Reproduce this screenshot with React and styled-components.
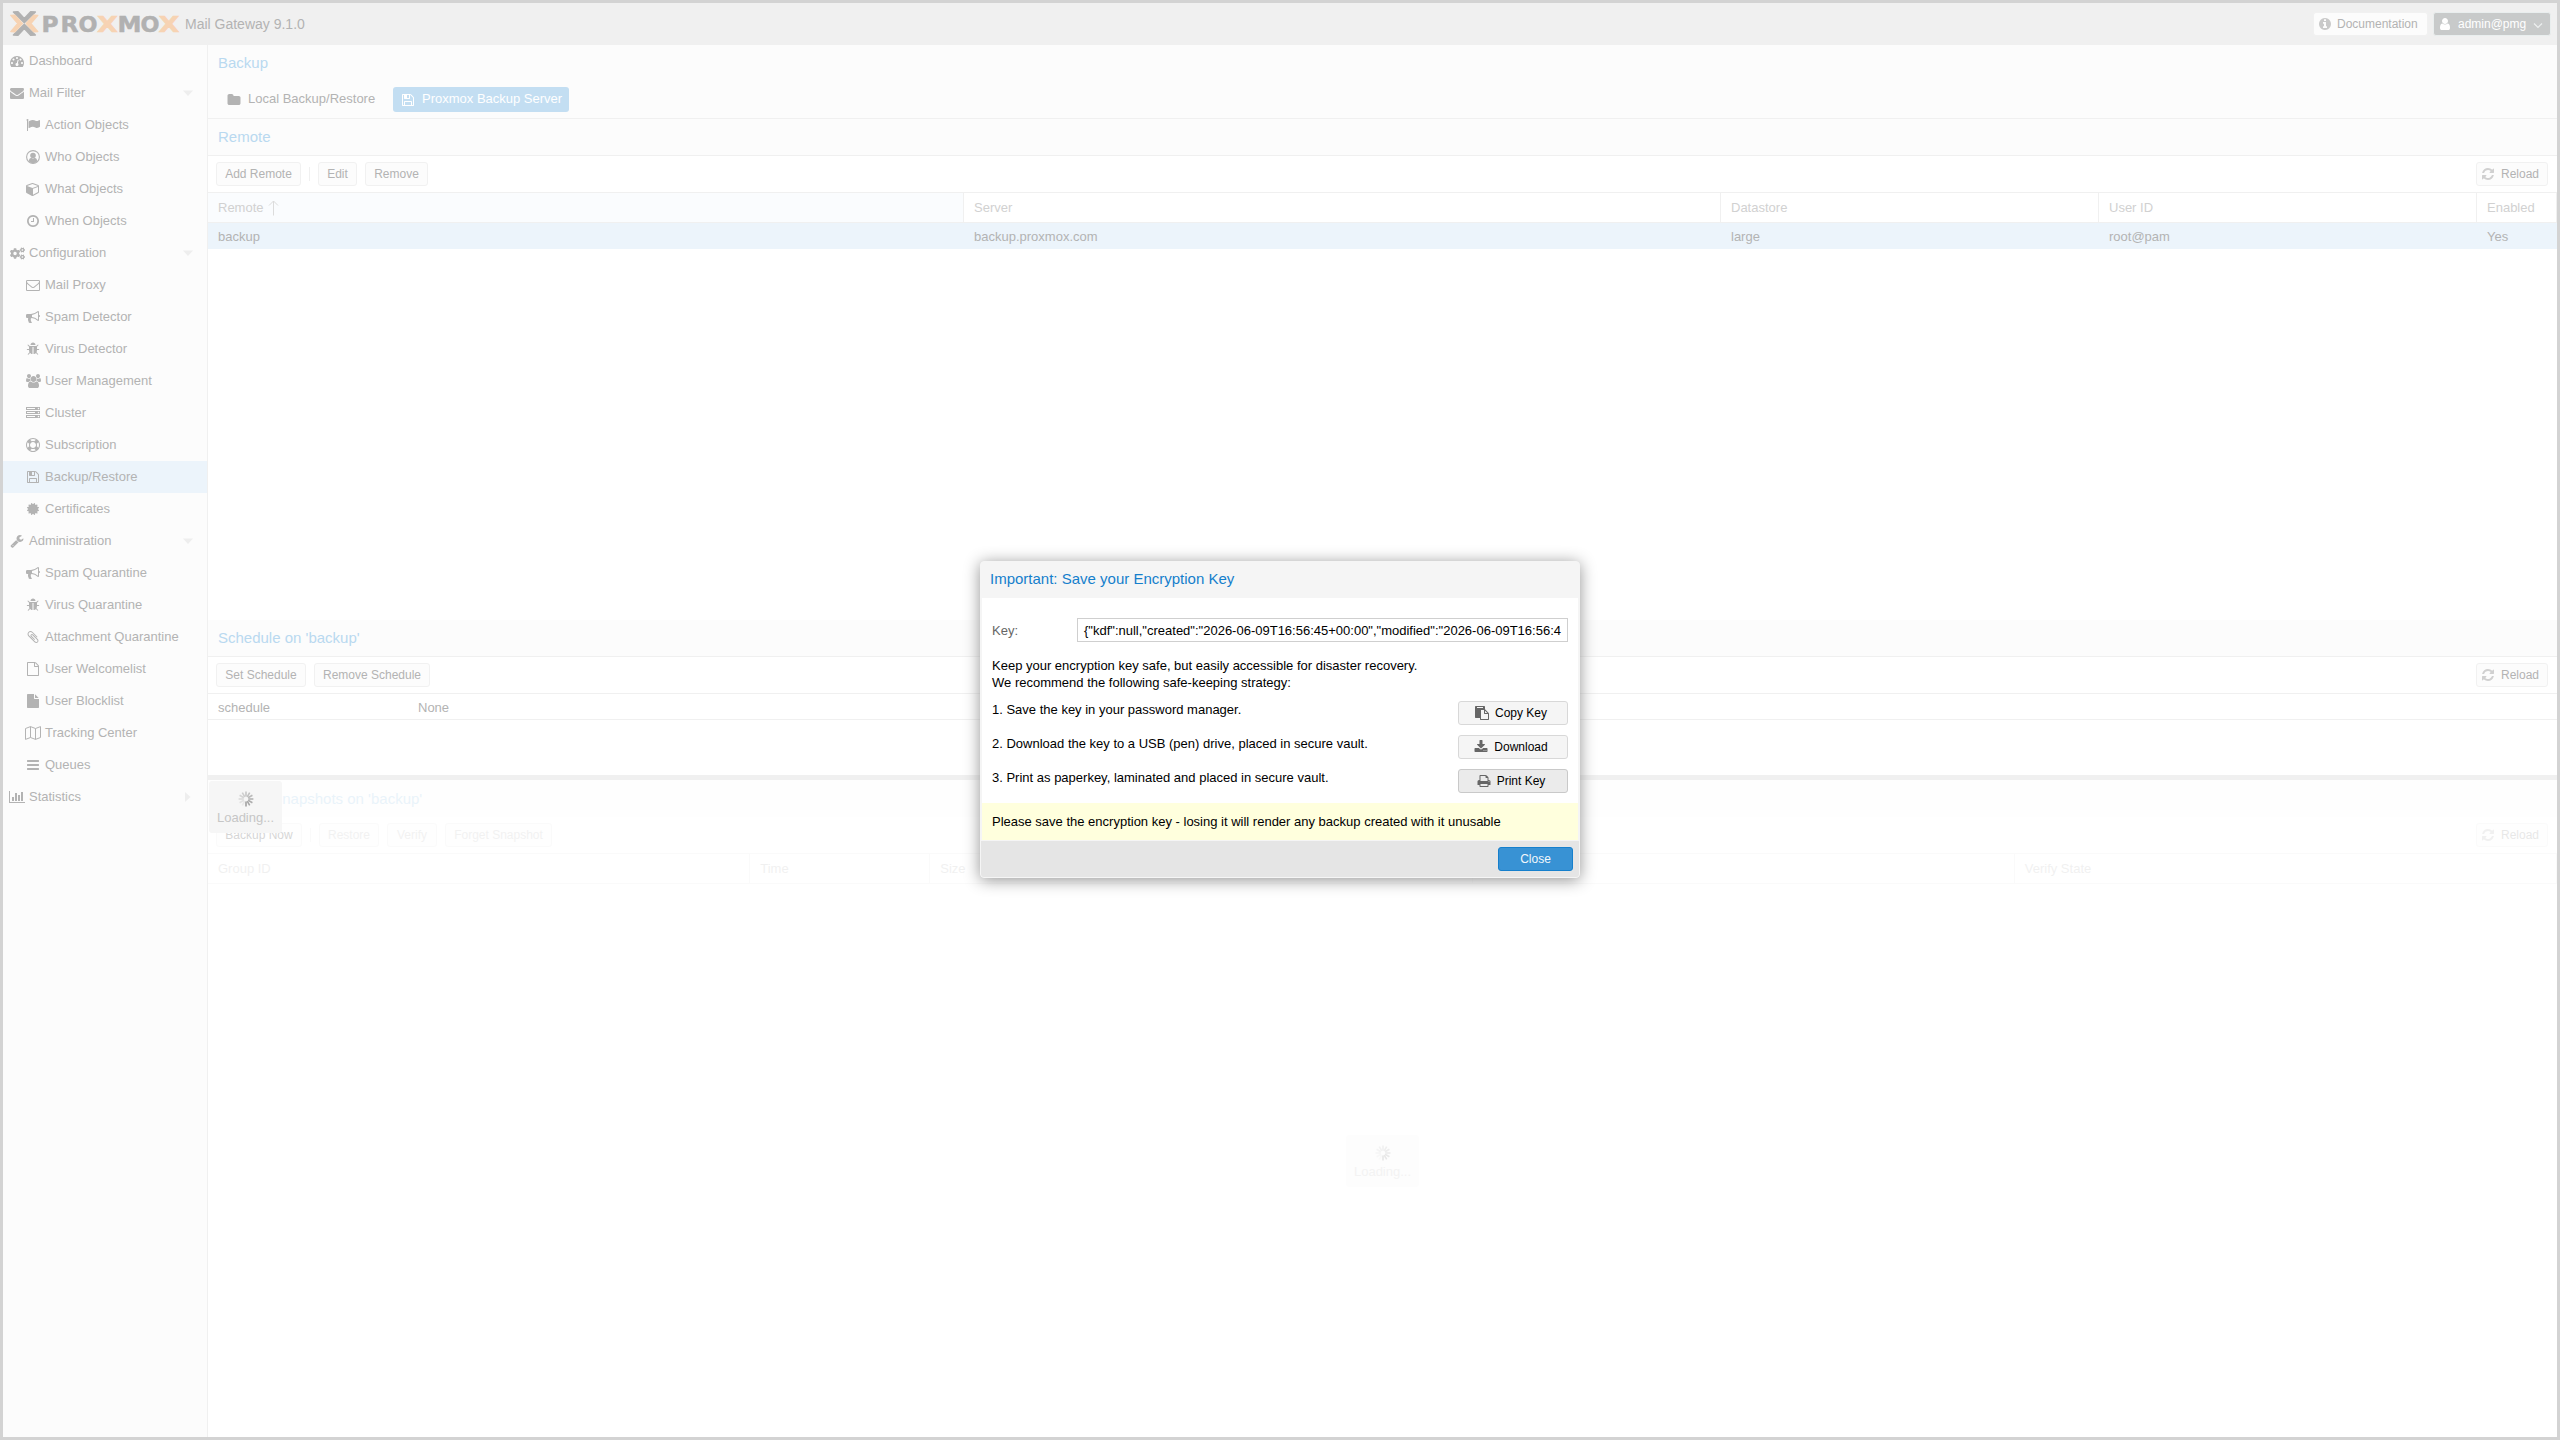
import React from 'react'
import styled, { createGlobalStyle, css } from 'styled-components'
import { FaCogs } from 'react-icons/fa'

const GlobalStyle = createGlobalStyle`
  * {
    box-sizing: border-box;
  }
  body {
    margin: 0;
    background: #fff;
    font-family: "Liberation Sans", Arial, sans-serif;
    font-size: 13px;
    line-height: 17px;
    color: #b3b3b3;
  }
`;

/* ---------- icons ---------- */

const paths = {
  dashboard: 'M384 1152q0-53-37.5-90.5t-90.5-37.5-90.5 37.5-37.5 90.5 37.5 90.5 90.5 37.5 90.5-37.5 37.5-90.5zm192-448q0-53-37.5-90.5t-90.5-37.5-90.5 37.5-37.5 90.5 37.5 90.5 90.5 37.5 90.5-37.5 37.5-90.5zm428 481l101-382q6-26-7.5-48.5t-38.5-29.5-48 6.5-30 39.5l-101 382q-60 5-107 43.5t-63 98.5q-20 77 20 146t117 89 146-20 89-117q16-60-6-117t-72-91zm660-33q0-53-37.5-90.5t-90.5-37.5-90.5 37.5-37.5 90.5 37.5 90.5 90.5 37.5 90.5-37.5 37.5-90.5zm-640-640q0-53-37.5-90.5t-90.5-37.5-90.5 37.5-37.5 90.5 37.5 90.5 90.5 37.5 90.5-37.5 37.5-90.5zm448 192q0-53-37.5-90.5t-90.5-37.5-90.5 37.5-37.5 90.5 37.5 90.5 90.5 37.5 90.5-37.5 37.5-90.5zm320 448q0 261-141 483-19 29-54 29h-1402q-35 0-54-29-141-221-141-483 0-182 71-348t191-286 286-191 348-71 348 71 286 191 191 286 71 348z',
  envelope: 'M1792 710v794q0 66-47 113t-113 47h-1472q-66 0-113-47t-47-113v-794q44 49 101 87 362 246 497 345 57 42 92.5 65.5t94.5 48 110 24.5h2q51 0 110-24.5t94.5-48 92.5-65.5q170-123 498-345 57-39 100-87zm0-294q0 79-49 151t-122 123q-376 261-468 325-10 7-42.5 31t-54 38.5-52 32.5-57.5 27-50 9h-2q-23 0-50-9t-57.5-27-52-32.5-54-38.5-42.5-31q-91-64-262-182.5t-205-142.5q-62-42-117-115.5t-55-136.5q0-78 41.5-130t118.5-52h1472q65 0 112.5 47t47.5 113z',
  flag: 'M320 256q0 72-64 110v1266q0 13-9.5 22.5t-22.5 9.5h-64q-13 0-22.5-9.5t-9.5-22.5v-1266q-64-38-64-110 0-53 37.5-90.5t90.5-37.5 90.5 37.5 37.5 90.5zm1472 64v763q0 25-12.5 38.5t-39.5 27.5q-215 116-369 116-61 0-123.5-22t-108.5-48-115.5-48-142.5-22q-192 0-464 146-17 9-33 9-26 0-45-19t-19-45v-742q0-32 31-55 21-14 79-43 236-120 421-120 107 0 200 29t219 88q38 19 88 19 54 0 117.5-21t110-47 88-47 54.5-21q26 0 45 19t19 45z',
  cube: 'M896 1629l640-349v-636l-640 233v752zm-64-865l698-254-698-254-698 254zm832-252v768q0 35-18 65t-49 47l-704 384q-28 16-61 16t-61-16l-704-384q-31-17-49-47t-18-65v-768q0-40 23-73t61-47l704-256q22-8 44-8t44 8l704 256q38 14 61 47t23 73z',
  clock: 'M1024 544v448q0 14-9 23t-23 9h-320q-14 0-23-9t-9-23v-64q0-14 9-23t23-9h224v-352q0-14 9-23t23-9h64q14 0 23 9t9 23zm416 352q0-148-73-273t-198-198-273-73-273 73-198 198-73 273 73 273 198 198 273 73 273-73 198-198 73-273zm224 0q0 209-103 385.5t-279.5 279.5-385.5 103-385.5-103-279.5-279.5-103-385.5 103-385.5 279.5-279.5 385.5-103 385.5 103 279.5 279.5 103 385.5z',
  mail: 'M1664 1504v-768q-32 36-69 66-268 206-426 338-51 43-83 67t-86.5 48.5-102.5 24.5h-2q-48 0-102.5-24.5t-86.5-48.5-83-67q-158-132-426-338-37-30-69-66v768q0 13 9.5 22.5t22.5 9.5h1472q13 0 22.5-9.5t9.5-22.5zm0-1051v-24.5l-.5-13-3-12.5-5.5-9-9-7.5-14-2.5h-1472q-13 0-22.5 9.5t-9.5 22.5q0 168 147 284 193 152 401 317 6 5 35 29.5t46 37.5 44.5 31.5 50.5 27.5 43 9h2q20 0 43-9t50.5-27.5 44.5-31.5 46-37.5 35-29.5q208-165 401-317 54-43 100.5-115.5t46.5-131.5zm128-37v1088q0 66-47 113t-113 47h-1472q-66 0-113-47t-47-113v-1088q0-66 47-113t113-47h1472q66 0 113 47t47 113z',
  bullhorn: 'M1664 640q53 0 90.5 37.5t37.5 90.5-37.5 90.5-90.5 37.5v384q0 52-38 90t-90 38q-417-347-812-380-58 19-91 66t-31 100.5 40 92.5q-20 33-23 65.5t6 58 33.5 55 48 50 61.5 50.5q-29 58-111.5 83t-168.5 11.5-132-55.5q-7-23-29.5-87.5t-32-94.5-23-89-15-101 3.5-98.5 22-110.5h-122q-66 0-113-47t-47-113v-192q0-66 47-113t113-47h480q435 0 896-384 52 0 90 38t38 90v384zm-128 604v-954q-394 302-768 343v270q377 42 768 341z',
  bug: 'M1696 960q0 26-19 45t-45 19h-224q0 171-67 290l208 209q19 19 19 45t-19 45q-18 19-45 19t-45-19l-198-197q-5 5-15 13t-42 28.5-65 36.5-82 29-97 13v-896h-128v896q-51 0-101.5-13.5t-87-33-66-39-43.5-32.5l-15-14-183 207q-20 21-48 21-24 0-43-16-19-18-20.5-44.5t15.5-46.5l202-227q-58-114-58-274h-224q-26 0-45-19t-19-45 19-45 45-19h224v-294l-173-173q-19-19-19-45t19-45 45-19 45 19l173 173h844l173-173q19-19 45-19t45 19 19 45-19 45l-173 173v294h224q26 0 45 19t19 45zm-480-576h-640q0-133 93.5-226.5t226.5-93.5 226.5 93.5 93.5 226.5z',
  users: 'M593 896q-162 5-265 128h-134q-82 0-138-40.5t-56-118.5q0-353 124-353 6 0 43.5 21t97.5 42.5 119 21.5q67 0 133-23-5 37-5 66 0 139 81 256zm1071 637q0 120-73 189.5t-194 69.5h-874q-121 0-194-69.5t-73-189.5q0-53 3.5-103.5t14-109 26.5-108.5 43-97.5 62-81 85.5-53.5 111.5-20q10 0 43 21.5t73 48 107 48 135 21.5 135-21.5 107-48 73-48 43-21.5q61 0 111.5 20t85.5 53.5 62 81 43 97.5 26.5 108.5 14 109 3.5 103.5zm-1024-1277q0 106-75 181t-181 75-181-75-75-181 75-181 181-75 181 75 75 181zm704 384q0 159-112.5 271.5t-271.5 112.5-271.5-112.5-112.5-271.5 112.5-271.5 271.5-112.5 271.5 112.5 112.5 271.5zm576 225q0 78-56 118.5t-138 40.5h-134q-103-123-265-128 81-117 81-256 0-29-5-66 66 23 133 23 59 0 119-21.5t97.5-42.5 43.5-21q124 0 124 353zm-128-609q0 106-75 181t-181 75-181-75-75-181 75-181 181-75 181 75 75 181z',
  server: 'M128 1408h1024v-128h-1024v128zm0-512h1024v-128h-1024v128zm1568 448q0-40-28-68t-68-28-68 28-28 68 28 68 68 28 68-28 28-68zm-1568-960h1024v-128h-1024v128zm1568 448q0-40-28-68t-68-28-68 28-28 68 28 68 68 28 68-28 28-68zm0-512q0-40-28-68t-68-28-68 28-28 68 28 68 68 28 68-28 28-68zm96 832v384h-1792v-384h1792zm0-512v384h-1792v-384h1792zm0-512v384h-1792v-384h1792z',
  ring: 'M896 0q182 0 348 71t286 191 191 286 71 348-71 348-191 286-286 191-348 71-348-71-286-191-191-286-71-348 71-348 191-286 286-191 348-71zm0 128q-190 0-361 90l194 194q82-28 167-28t167 28l194-194q-171-90-361-90zm-678 1129l194-194q-28-82-28-167t28-167l-194-194q-90 171-90 361t90 361zm678 407q190 0 361-90l-194-194q-82 28-167 28t-167-28l-194 194q171 90 361 90zm0-384q159 0 271.5-112.5t112.5-271.5-112.5-271.5-271.5-112.5-271.5 112.5-112.5 271.5 112.5 271.5 271.5 112.5zm484-217l194 194q90-171 90-361t-90-361l-194 194q28 82 28 167t-28 167z',
  floppy: 'M512 1536h768v-384h-768v384zm896 0h128v-896q0-14-10-38.5t-20-34.5l-281-281q-10-10-34-20t-39-10v416q0 40-28 68t-68 28h-576q-40 0-68-28t-28-68v-416h-128v1280h128v-416q0-40 28-68t68-28h832q40 0 68 28t28 68v416zm-384-928v-320q0-13-9.5-22.5t-22.5-9.5h-192q-13 0-22.5 9.5t-9.5 22.5v320q0 13 9.5 22.5t22.5 9.5h192q13 0 22.5-9.5t9.5-22.5zm640 32v928q0 40-28 68t-68 28h-1344q-40 0-68-28t-28-68v-1344q0-40 28-68t68-28h928q40 0 88 20t76 48l280 280q28 28 48 76t20 88z',
  certificate: 'M1504 896l138 135q30 28 20 70-12 41-52 51l-188 48 53 186q12 41-19 70-29 31-70 19l-186-53-48 188q-10 40-51 52-12 2-19 2-31 0-51-22l-135-138-135 138q-28 30-70 20-41-11-51-52l-48-188-186 53q-41 12-70-19-31-29-19-70l53-186-188-48q-40-10-52-51-10-42 20-70l138-135-138-135q-30-28-20-70 12-41 52-51l188-48-53-186q-12-41 19-70 29-31 70-19l186 53 48-188q10-41 51-51 41-12 70 19l135 139 135-139q29-30 70-19 41 10 51 51l48 188 186-53q41-12 70 19 31 29 19 70l-53 186 188 48q40 10 52 51 10 42-20 70z',
  wrench: 'M448 1472q0-26-19-45t-45-19-45 19-19 45 19 45 45 19 45-19 19-45zm644-420l-682 682q-37 37-90 37-52 0-91-37l-106-108q-38-36-38-90 0-53 38-91l681-681q39 98 114.5 173.5t173.5 114.5zm634-435q0 39-23 106-47 134-164.5 217.5t-258.5 83.5q-185 0-316.5-131.5t-131.5-316.5 131.5-316.5 316.5-131.5q58 0 121.5 16.5t107.5 46.5q16 11 16 28t-16 28l-293 169v224l193 107q5-3 79-48.5t135.5-81 70.5-35.5q15 0 23.5 10t8.5 25z',
  paperclip: 'M1596 1385q0 117-79 196t-196 79q-135 0-235-100l-777-776q-113-115-113-271 0-159 110-270t269-111q158 0 273 113l605 606q10 10 10 22 0 16-30.5 46.5t-46.5 30.5q-13 0-23-10l-606-607q-79-77-181-77-106 0-179 75t-73 181q0 105 76 181l776 777q63 63 145 63 64 0 106-42t42-106q0-82-63-145l-581-581q-26-24-60-24-29 0-48 19t-19 48q0 32 25 59l410 410q10 10 10 22 0 16-31 47t-47 31q-12 0-22-10l-410-410q-63-61-63-149 0-82 57-139t139-57q88 0 149 63l581 581q100 98 100 235z',
  fileO: 'M1596 380q28 28 48 76t20 88v1152q0 40-28 68t-68 28h-1344q-40 0-68-28t-28-68v-1600q0-40 28-68t68-28h896q40 0 88 20t76 48zm-444-244v376h376q-10-29-22-41l-313-313q-12-12-41-22zm384 1528v-1024h-416q-40 0-68-28t-28-68v-416h-768v1536h1280z',
  file: 'M1152 512v-472q22 14 36 28l408 408q14 14 28 36h-472zm-128 32q0 40 28 68t68 28h544v1056q0 40-28 68t-68 28h-1344q-40 0-68-28t-28-68v-1600q0-40 28-68t68-28h800v544z',
  bars: 'M1664 1344v128q0 26-19 45t-45 19h-1408q-26 0-45-19t-19-45v-128q0-26 19-45t45-19h1408q26 0 45 19t19 45zm0-512v128q0 26-19 45t-45 19h-1408q-26 0-45-19t-19-45v-128q0-26 19-45t45-19h1408q26 0 45 19t19 45zm0-512v128q0 26-19 45t-45 19h-1408q-26 0-45-19t-19-45v-128q0-26 19-45t45-19h1408q26 0 45 19t19 45z',
  chart: 'M640 896v512h-256v-512h256zm384-512v1024h-256v-1024h256zm1024 1152v128h-2048v-1536h128v1408h1920zm-640-896v768h-256v-768h256zm384-384v1152h-256v-1152h256z',
  folder: 'M1728 608v704q0 92-66 158t-158 66h-1216q-92 0-158-66t-66-158v-960q0-92 66-158t158-66h320q92 0 158 66t66 158v32h672q92 0 158 66t66 158z',
  refresh: 'M1639 1056q0 5-1 7-64 268-268 434.5t-478 166.5q-146 0-282.5-55t-243.5-157l-129 129q-19 19-45 19t-45-19-19-45v-448q0-26 19-45t45-19h448q26 0 45 19t19 45-19 45l-137 137q71 66 161 102t187 36q134 0 250-65t186-179q11-17 53-117 8-23 30-23h192q13 0 22.5 9.5t9.5 22.5zm25-800v448q0 26-19 45t-45 19h-448q-26 0-45-19t-19-45 19-45l138-138q-148-137-349-137-134 0-250 65t-186 179q-11 17-53 117-8 23-30 23h-199q-13 0-22.5-9.5t-9.5-22.5v-7q65-268 270-434.5t480-166.5q146 0 284 55.5t245 156.5l130-129q19-19 45-19t45 19 19 45z',
  info: 'M1152 1376v-160q0-14-9-23t-23-9h-96v-512q0-14-9-23t-23-9h-320q-14 0-23 9t-9 23v160q0 14 9 23t23 9h96v320h-96q-14 0-23 9t-9 23v160q0 14 9 23t23 9h448q14 0 23-9t9-23zm-128-896v-160q0-14-9-23t-23-9h-192q-14 0-23 9t-9 23v160q0 14 9 23t23 9h192q14 0 23-9t9-23zm640 416q0 209-103 385.5t-279.5 279.5-385.5 103-385.5-103-279.5-279.5-103-385.5 103-385.5 279.5-279.5 385.5-103 385.5 103 279.5 279.5 103 385.5z',
  user: 'M1536 1399q0 109-62.5 187t-150.5 78h-854q-88 0-150.5-78t-62.5-187q0-85 8.5-160.5t31.5-152 58.5-131 94-89 134.5-34.5q131 128 313 128t313-128q76 0 134.5 34.5t94 89 58.5 131 31.5 152 8.5 160.5zm-256-887q0 159-112.5 271.5t-271.5 112.5-271.5-112.5-112.5-271.5 112.5-271.5 271.5-112.5 271.5 112.5 112.5 271.5z',
  print: 'M448 1536h896v-256h-896v256zm0-640h896v-384h-160q-40 0-68-28t-28-68v-160h-640v640zm1152 64q0-26-19-45t-45-19-45 19-19 45 19 45 45 19 45-19 19-45zm128 0v416q0 13-9.5 22.5t-22.5 9.5h-224v160q0 40-28 68t-68 28h-960q-40 0-68-28t-28-68v-160h-224q-13 0-22.5-9.5t-9.5-22.5v-416q0-79 56.5-135.5t135.5-56.5h64v-544q0-40 28-68t68-28h672q40 0 88 20t76 48l152 152q28 28 48 76t20 88v256h64q79 0 135.5 56.5t56.5 135.5z',
  download: 'M1344 1344q0-26-19-45t-45-19-45 19-19 45 19 45 45 19 45-19 19-45zm256 0q0-26-19-45t-45-19-45 19-19 45 19 45 45 19 45-19 19-45zm128-224v320q0 40-28 68t-68 28h-1472q-40 0-68-28t-28-68v-320q0-40 28-68t68-28h465l135 136q58 56 136 56t136-56l136-136h464q40 0 68 28t28 68zm-325-569q17 41-14 70l-448 448q-18 19-45 19t-45-19l-448-448q-31-29-14-70 17-39 59-39h256v-448q0-26 19-45t45-19h256q26 0 45 19t19 45v448h256q42 0 59 39z',
  paste: 'M768 1664h896v-640h-416q-40 0-68-28t-28-68v-416h-384v1152zm256-1440v-64q0-13-9.5-22.5t-22.5-9.5h-704q-13 0-22.5 9.5t-9.5 22.5v64q0 13 9.5 22.5t22.5 9.5h704q13 0 22.5-9.5t9.5-22.5zm256 672h299l-299-299v299zm512 128v672q0 40-28 68t-68 28h-960q-40 0-68-28t-28-68v-160h-544q-40 0-68-28t-28-68v-1344q0-40 28-68t68-28h1088q40 0 68 28t28 68v328q21 13 36 28l408 408q28 28 48 76t20 88z',
};

const wide = { users: 1920, chart: 2048 };

const Svg = styled.svg`
  display: block;
  flex: none;
  fill: currentColor;
`;

const Icon = ({ name }) => {
  if (name === 'cogs') return <FaCogs size={15} />
  if (name === 'userCircle') {
    return (
      <Svg width="14" height="14" viewBox="0 0 14 14">
        <circle cx="7" cy="7" r="6.4" fill="none" stroke="currentColor" strokeWidth="1.1" />
        <circle cx="7" cy="5.5" r="2.8" />
        <path d="M2.6 11.2q.5-3.1 2.5-3.4 1.9 1.3 3.8 0 2 .3 2.5 3.4Q9.6 13.2 7 13.2 4.4 13.2 2.6 11.2z" />
      </Svg>
    )
  }
  if (name === 'map') {
    return (
      <Svg width="16" height="14" viewBox="0 0 16 14">
        <path
          d="M.5 2.5L5.5.6l5 1.9 5-1.9v10.9l-5 1.9-5-1.9-5 1.9zM5.5.6v10.9M10.5 2.5v10.9"
          fill="none" stroke="currentColor" strokeWidth="1" strokeLinejoin="round"
        />
      </Svg>
    )
  }
  const w = wide[name] || 1792;
  return (
    <Svg width={w / 128} height="14" viewBox={`0 0 ${w} 1792`}>
      <path d={paths[name]} />
    </Svg>
  )
}

const Spinner = () => (
  <Svg width="16" height="16" viewBox="-8 -8 16 16">
    {[...Array(12)].map((_, i) => (
      <line
        key={i}
        x1="0" y1="-2.4" x2="0" y2="-7.4"
        stroke="currentColor" strokeWidth="1.6"
        opacity={0.15 + (((i + 5) % 12) / 11) * 0.85}
        transform={`rotate(${i * 30})`}
      />
    ))}
  </Svg>
)

const letters = [
  ['P', 41.5, 17], ['R', 60.5, 18], ['O', 78.5, 19], ['X', 97, 21],
  ['M', 117.5, 24], ['O', 140.5, 19], ['X', 158.5, 21],
];

const Logo = () => (
  <Svg width="180" height="42" viewBox="3 3 180 42">
    <g strokeLinejoin="round" strokeWidth="1.4">
      <g fill="#b1b1b1" stroke="#b1b1b1">
        <path d="M13.4 12L18 11.7 24.3 18.4 30.6 11.7 35.4 12 24.3 22.8z" />
        <path d="M13.4 35L18 35.3 24.3 28.600 30.6 35.3 35.4 35 24.3 24.2z" />
      </g>
      <g fill="#f7d3b3" stroke="#f7d3b3">
        <path d="M10.8 15.400L14.8 15.200 22.400 23.500 14.800 31.800 10.800 31.600 17.800 23.500z" />
        <path d="M37.800 15.400L33.800 15.200 26.200 23.500 33.800 31.800 37.800 31.600 30.800 23.500z" />
      </g>
    </g>
    <g fontFamily="DejaVu Sans, sans-serif" fontWeight="700" fontSize="22" strokeWidth="0.5">
      {letters.map(([c, x, w]) => (
        <text
          key={x} x={x} y="32" textLength={w} lengthAdjust="spacingAndGlyphs"
          fill={c === 'X' ? '#f7d3b3' : '#b1b1b1'}
          stroke={c === 'X' ? '#f7d3b3' : '#b1b1b1'}
        >
          {c}
        </text>
      ))}
    </g>
  </Svg>
)

/* ---------- page frame ---------- */

const Viewport = styled.div`
  position: relative;
  display: flex;
  flex-direction: column;
  width: 2560px;
  height: 1440px;
  border: 3px solid #d3d3d3;
  overflow: hidden;
  white-space: nowrap;
`;

const Header = styled.header`
  display: flex;
  align-items: center;
  height: 42px;
  padding-right: 6px;
  background: #f0f0f0;
`;
const Version = styled.span`
  flex: 1;
  margin-left: 2px;
  font-size: 14px;
`;
const HeaderButton = styled.div`
  display: flex;
  align-items: center;
  width: ${({ $dark }) => ($dark ? 118 : 115)}px;
  height: 24px;
  margin-left: 5px;
  padding-left: 4px;
  gap: ${({ $dark }) => ($dark ? 6 : 5)}px;
  border: 1px solid ${({ $dark }) => ($dark ? '#e9eeee' : '#f1f1f1')};
  border-radius: 3px;
  background: ${({ $dark }) => ($dark ? '#c8caca' : '#fcfcfc')};
  color: ${({ $dark }) => ($dark ? '#fff' : '#b3b3b3')};
  font-size: 12px;
`;
const ButtonIcon = styled.span`
  color: ${({ $color }) => $color};
`;
const Chevron = styled(Svg)`
  margin: 3px 0 0 -1px;
`;

const Main = styled.div`
  display: flex;
  flex: 1;
  min-height: 0;
`;

const Sidebar = styled.nav`
  width: 205px;
  border-right: 1px solid #f0f0f0;
  background: #fcfcfc;
`;
const NavItem = styled.div`
  display: flex;
  align-items: center;
  height: 32px;
  padding-left: ${({ $child }) => ($child ? 21 : 5)}px;
  background: ${({ $active }) => ($active ? '#ecf4fb' : 'transparent')};
`;
const NavIcon = styled.span`
  display: flex;
  justify-content: center;
  width: 18px;
  margin-right: 3px;
`;
const NavLabel = styled.span`
  flex: 1;
  padding-bottom: 2px;
`;
const Arrow = styled.svg`
  width: 10px;
  height: 10px;
  margin-right: 14px;
  fill: #eee;
`;

const Content = styled.main`
  display: flex;
  flex: 1;
  flex-direction: column;
  min-width: 0;
`;

/* ---------- panels ---------- */

const PanelTitle = styled.div`
  height: ${({ $noLine }) => ($noLine ? 36 : 37)}px;
  padding: 0 10px;
  border-bottom: ${({ $noLine }) => ($noLine ? 'none' : '1px solid #f0f0f0')};
  background: #fcfcfc;
  color: #b9d9f0;
  font-size: 15px;
  line-height: 36px;
`;
const Tabs = styled.div`
  display: flex;
  align-items: flex-start;
  gap: 9px;
  height: 38px;
  padding: 6px 11px 0;
  border-bottom: 1px solid #f0f0f0;
  background: #fcfcfc;
`;
const Tab = styled.div`
  display: flex;
  align-items: center;
  gap: 7px;
  width: ${({ $width }) => $width}px;
  height: 25px;
  padding-left: 8px;
  border-radius: 3px;
  ${({ $active }) => $active && css`
    background: #c3def2;
    color: #fff;
  `}
`;
const TabLabel = styled.span`
  padding-bottom: 2px;
`;
const Toolbar = styled.div`
  display: flex;
  align-items: center;
  gap: 8px;
  height: 37px;
  padding: 0 9px 0 8px;
  border-bottom: 1px solid #f0f0f0;
`;
const Button = styled.div`
  display: flex;
  flex: none;
  align-items: center;
  justify-content: center;
  width: ${({ $width }) => $width}px;
  height: 24px;
  border: 1px solid #f1f1f1;
  border-radius: 3px;
  background: #fcfcfc;
  color: ${({ $color }) => $color || 'inherit'};
  font-size: 12px;
`;
const ReloadButton = styled(Button)`
  justify-content: flex-start;
  gap: 6px;
  margin-left: auto;
  padding-left: 4px;

  svg {
    color: #d0d0d0;
  }
`;
const Separator = styled.div`
  width: 1px;
  height: 14px;
  background: #f0f0f0;
`;

const GridHead = styled.div`
  display: flex;
  height: 30px;
  border-bottom: 1px solid #f0f0f0;
  color: #d1d1d1;
`;
const GridRow = styled.div`
  display: flex;
  height: 26px;
  background: ${({ $selected }) => ($selected ? '#ecf4fb' : '#fff')};
  ${({ $line }) => $line && css`
    padding-top: 2px;
    border-bottom: 1px solid #f0f0f0;
  `}
`;
const Cell = styled.div`
  display: flex;
  flex: ${({ $width }) => ($width ? `0 0 ${$width}px` : '1 1 0')};
  align-items: center;
  gap: 2px;
  padding-left: 10px;
`;
const HeadCell = styled(Cell)`
  border-right: 1px solid #f0f0f0;
  background: ${({ $sorted }) => ($sorted ? '#fafcfe' : '#fff')};
`;
const RemoteBody = styled.div`
  height: 371px;
`;
const ScheduleBody = styled.div`
  height: 55px;
`;
const Splitter = styled.div`
  height: 5px;
  background: #f0f0f0;
`;

const SnapshotPanel = styled.section`
  position: relative;
  flex: 1;
`;
/* the panel behind its own load mask */
const Masked = styled.div`
  opacity: 0.3;

  ${PanelTitle} {
    border-color: #fcfcfc;
    line-height: 38px;
  }
`;
const GridMask = styled.div`
  position: absolute;
  inset: 104px 0 0;
  display: flex;
  align-items: center;
  justify-content: center;
`;
const LoadBox = styled.div`
  display: flex;
  flex-direction: column;
  align-items: center;
  width: 73px;
  height: 52px;
  padding-top: 10px;
  gap: 2px;
  border-radius: 3px;
  background: ${({ $faint }) => ($faint ? '#fdfdfd' : '#f6f6f6')};
  color: ${({ $faint }) => ($faint ? '#f3f3f3' : '#c6c6c6')};

  svg {
    color: ${({ $faint }) => ($faint ? '#e6e6e6' : '#a0a0a0')};
  }
`;
const PanelLoad = styled(LoadBox)`
  position: absolute;
  top: 1px;
  left: 1px;
`;

/* ---------- dialog ---------- */

const Dialog = styled.div`
  position: absolute;
  top: 558px;
  left: 977px;
  width: 600px;
  height: 317px;
  border: 1px solid #f5f5f5;
  border-radius: 4px;
  background: #f5f5f5;
  box-shadow: 0 2px 16px #929292;
  color: #000;
  overflow: hidden;
`;
const DialogTitle = styled.div`
  height: 36px;
  padding-left: 9px;
  color: #157fcc;
  font-size: 15px;
  line-height: 33px;
`;
const DialogBody = styled.div`
  height: 242px;
  margin: 0 1px 1px;
  background: #fff;
`;
const DialogForm = styled.div`
  height: 205px;
  padding: 20px 10px 0;
`;
const Field = styled.label`
  display: flex;
  align-items: center;
  justify-content: space-between;
  height: 24px;
  color: #666;
`;
const KeyValue = styled.div`
  width: 491px;
  height: 24px;
  padding-left: 6px;
  border: 1px solid #cfcfcf;
  color: #000;
  line-height: 23px;
  overflow: hidden;
`;
const Hint = styled.p`
  margin: 15px 0 0;
`;
const Steps = styled.div`
  display: flex;
  flex-direction: column;
  gap: 10px;
  margin-top: 10px;
`;
const Step = styled.div`
  display: flex;
  align-items: flex-start;
  justify-content: space-between;
`;
const StepButton = styled(Button)`
  gap: 6px;
  padding-right: 4px;
  border-color: ${({ $hover }) => ($hover ? '#c9c9c9' : '#d8d8d8')};
  background: ${({ $hover }) => ($hover ? '#ebebeb' : '#f5f5f5')};

  svg {
    color: #666;
  }
`;
const Warning = styled.div`
  height: 37px;
  padding-left: 10px;
  background: #ffffdd;
  line-height: 37px;
`;
const DialogFooter = styled.div`
  display: flex;
  align-items: center;
  justify-content: flex-end;
  height: 36px;
  padding-right: 6px;
  background: #e5e5e5;
`;
const CloseButton = styled(Button)`
  border-color: #157fcc;
  background: #3892d4;
  color: #f2f7fb;
`;

/* ---------- data ---------- */

const nav = [
  { icon: 'dashboard', label: 'Dashboard' },
  { icon: 'envelope', label: 'Mail Filter', arrow: 'down' },
  { icon: 'flag', label: 'Action Objects', child: true },
  { icon: 'userCircle', label: 'Who Objects', child: true },
  { icon: 'cube', label: 'What Objects', child: true },
  { icon: 'clock', label: 'When Objects', child: true },
  { icon: 'cogs', label: 'Configuration', arrow: 'down' },
  { icon: 'mail', label: 'Mail Proxy', child: true },
  { icon: 'bullhorn', label: 'Spam Detector', child: true },
  { icon: 'bug', label: 'Virus Detector', child: true },
  { icon: 'users', label: 'User Management', child: true },
  { icon: 'server', label: 'Cluster', child: true },
  { icon: 'ring', label: 'Subscription', child: true },
  { icon: 'floppy', label: 'Backup/Restore', child: true, active: true },
  { icon: 'certificate', label: 'Certificates', child: true },
  { icon: 'wrench', label: 'Administration', arrow: 'down' },
  { icon: 'bullhorn', label: 'Spam Quarantine', child: true },
  { icon: 'bug', label: 'Virus Quarantine', child: true },
  { icon: 'paperclip', label: 'Attachment Quarantine', child: true },
  { icon: 'fileO', label: 'User Welcomelist', child: true },
  { icon: 'file', label: 'User Blocklist', child: true },
  { icon: 'map', label: 'Tracking Center', child: true },
  { icon: 'bars', label: 'Queues', child: true },
  { icon: 'chart', label: 'Statistics', arrow: 'right' },
];

const remoteColumns = [
  { title: 'Remote', value: 'backup', width: 756, sorted: true },
  { title: 'Server', value: 'backup.proxmox.com', width: 757 },
  { title: 'Datastore', value: 'large', width: 378 },
  { title: 'User ID', value: 'root@pam', width: 378 },
  { title: 'Enabled', value: 'Yes' },
];

const steps = [
  { text: '1. Save the key in your password manager.', icon: 'paste', action: 'Copy Key' },
  { text: '2. Download the key to a USB (pen) drive, placed in secure vault.', icon: 'download', action: 'Download' },
  { text: '3. Print as paperkey, laminated and placed in secure vault.', icon: 'print', action: 'Print Key', hover: true },
];

const Reload = () => (
  <ReloadButton $width={72}>
    <Icon name="refresh" />
    Reload
  </ReloadButton>
)

const KeyDialog = () => (
  <Dialog>
    <DialogTitle>Important: Save your Encryption Key</DialogTitle>
    <DialogBody>
      <DialogForm>
        <Field>
          Key:
          <KeyValue>{'{"kdf":null,"created":"2026-06-09T16:56:45+00:00","modified":"2026-06-09T16:56:4'}</KeyValue>
        </Field>
        <Hint>
          Keep your encryption key safe, but easily accessible for disaster recovery.<br />
          We recommend the following safe-keeping strategy:
        </Hint>
        <Steps>
          {steps.map((s) => (
            <Step key={s.action}>
              <span>{s.text}</span>
              <StepButton $width={110} $hover={s.hover}>
                <Icon name={s.icon} />
                {s.action}
              </StepButton>
            </Step>
          ))}
        </Steps>
      </DialogForm>
      <Warning>Please save the encryption key - losing it will render any backup created with it unusable</Warning>
    </DialogBody>
    <DialogFooter>
      <CloseButton $width={75}>Close</CloseButton>
    </DialogFooter>
  </Dialog>
)

export default function App() {
  return (
    <Viewport>
      <GlobalStyle />
      <Header>
        <Logo />
        <Version>Mail Gateway 9.1.0</Version>
        <HeaderButton>
          <ButtonIcon $color="#c9c9c9"><Icon name="info" /></ButtonIcon>
          Documentation
        </HeaderButton>
        <HeaderButton $dark>
          <ButtonIcon $color="#fff"><Icon name="user" /></ButtonIcon>
          admin@pmg
          <Chevron width="14" height="8" viewBox="0 0 14 8">
            <path d="M3 1.500l4 4 4-4" fill="none" stroke="#eef0f0" strokeWidth="1.200" />
          </Chevron>
        </HeaderButton>
      </Header>
      <Main>
        <Sidebar>
          {nav.map((item) => (
            <NavItem key={item.label} $child={item.child} $active={item.active}>
              <NavIcon><Icon name={item.icon} /></NavIcon>
              <NavLabel>{item.label}</NavLabel>
              {item.arrow && (
                <Arrow viewBox="0 0 10 10">
                  <path d={item.arrow === 'down' ? 'M0 2.500h10L5 8z' : 'M2 0v10L7.500 5z'} />
                </Arrow>
              )}
            </NavItem>
          ))}
        </Sidebar>
        <Content>
          <PanelTitle $noLine>Backup</PanelTitle>
          <Tabs>
            <Tab $width={165}>
              <Icon name="folder" />
              <TabLabel>Local Backup/Restore</TabLabel>
            </Tab>
            <Tab $width={176} $active>
              <Icon name="floppy" />
              <TabLabel>Proxmox Backup Server</TabLabel>
            </Tab>
          </Tabs>

          <PanelTitle>Remote</PanelTitle>
          <Toolbar>
            <Button $width={85}>Add Remote</Button>
            <Separator />
            <Button $width={39}>Edit</Button>
            <Button $width={63}>Remove</Button>
            <Reload />
          </Toolbar>
          <GridHead>
            {remoteColumns.map((c) => (
              <HeadCell key={c.title} $width={c.width} $sorted={c.sorted}>
                {c.title}
                {c.sorted && (
                  <Svg width="14" height="16" viewBox="0 0 14 16">
                    <path d="M7.500 15.500V1M3 5.500L7.500 1 12 5.500" fill="none" stroke="#dcdcdc" />
                  </Svg>
                )}
              </HeadCell>
            ))}
          </GridHead>
          <GridRow $selected>
            {remoteColumns.map((c) => <Cell key={c.title} $width={c.width}>{c.value}</Cell>)}
          </GridRow>
          <RemoteBody />

          <PanelTitle>Schedule on 'backup'</PanelTitle>
          <Toolbar>
            <Button $width={90}>Set Schedule</Button>
            <Button $width={116}>Remove Schedule</Button>
            <Reload />
          </Toolbar>
          <GridRow $line>
            <Cell $width={200}>schedule</Cell>
            <Cell>None</Cell>
          </GridRow>
          <ScheduleBody />
          <Splitter />

          <SnapshotPanel>
            <Masked>
              <PanelTitle>Backup Snapshots on 'backup'</PanelTitle>
              <Toolbar>
                <Button $width={86} $color="#777">Backup Now</Button>
                <Separator />
                <Button $width={60} $color="#d4d4d4">Restore</Button>
                <Button $width={50} $color="#d4d4d4">Verify</Button>
                <Button $width={107} $color="#d4d4d4">Forget Snapshot</Button>
                <Reload />
              </Toolbar>
              <GridHead>
                <HeadCell>Group ID</HeadCell>
                <HeadCell $width={180}>Time</HeadCell>
                <HeadCell>Size</HeadCell>
                <HeadCell />
                <HeadCell>Verify State</HeadCell>
              </GridHead>
            </Masked>
            <GridMask>
              <LoadBox $faint>
                <Spinner />
                Loading...
              </LoadBox>
            </GridMask>
            <PanelLoad>
              <Spinner />
              Loading...
            </PanelLoad>
          </SnapshotPanel>
        </Content>
      </Main>
      <KeyDialog />
    </Viewport>
  )
}
